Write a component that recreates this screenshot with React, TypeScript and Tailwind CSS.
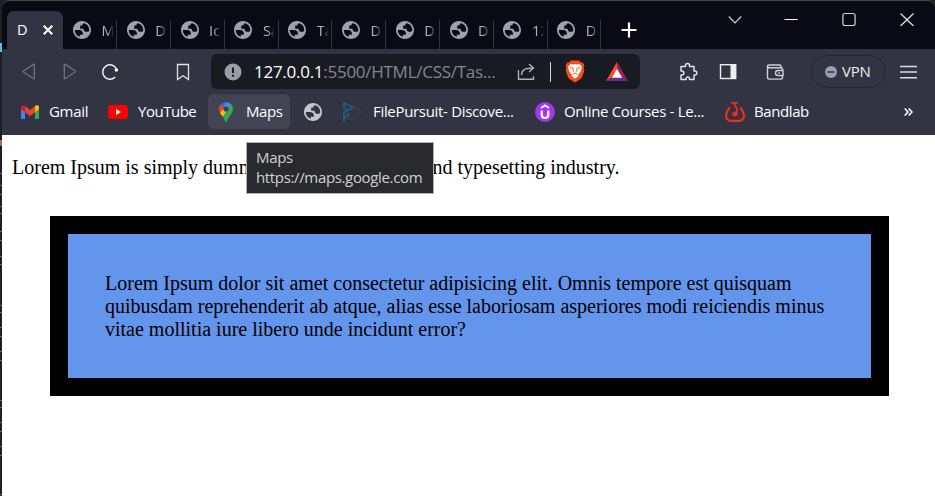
import type { ReactNode } from "react";

function Globe({ color }: { color: string }) {
  return (
    <svg viewBox="2 2 20 20" className="size-[18px] shrink-0" fill={color}>
      <path d="M12 2C6.48 2 2 6.48 2 12s4.48 10 10 10 10-4.48 10-10S17.52 2 12 2zM4 12h4.4c3.4.02 4.93 1.73 4.6 5.15H9.5v2.46A8 8 0 0 1 4 12zm16 0c0 .36-.03.72-.08 1.07-.68.62-1.56.93-2.62.93-2.4 0-3.6-1.15-3.6-3.45H10V7.1h2.4c0-1.68.95-2.6 2.7-2.45A8 8 0 0 1 20 12z" />
    </svg>
  );
}

function Tab({ title }: { title: string }) {
  return (
    <div className="mt-5 flex h-[29px] w-[53.8px] shrink-0 border-r border-[#35363b] pt-px pl-[9.5px]">
      <Globe color="#9da2ad" />
      <span className="ml-[10.5px] h-[20px] w-[12px] overflow-hidden text-[14.5px] leading-[20px] whitespace-nowrap text-[#b4b5ba] [mask-image:linear-gradient(to_right,black_40%,transparent)]">
        {title}
      </span>
    </div>
  );
}

function TabStrip() {
  const titles = ["My", "Do", "Ico", "Sa", "Tas", "Do", "Do", "Do", "12", "Do"];
  return (
    <div className="flex h-[48px] bg-[#0a0a14]">
      <div className="ml-[5px] mt-[10px] flex h-[38px] w-[56px] rounded-t-[7px] bg-[#323443] pt-[9px] pl-[10px] text-[14.5px] leading-[20px] text-white">
        <span className="w-[10px]">D</span>
        <svg viewBox="0 0 10 10" className="mt-[5px] ml-[16px] size-[10px]" stroke="white" strokeWidth="2">
          <path d="M.7.7l8.6 8.600M9.300.7L.7 9.300" />
        </svg>
      </div>
      <div className="-mt-px ml-[0.5px] flex">
        {titles.map((t, i) => (
          <Tab key={i} title={t} />
        ))}
      </div>
      <svg viewBox="0 0 16 16" className="mt-[21px] ml-[20px] size-[16px]" stroke="white" strokeWidth="2.2">
        <path d="M8 .5v15M.5 8h15" />
      </svg>
      <div className="mr-[21px] ml-auto flex pt-[11px]">
        <svg viewBox="0 0 14 14" className="mr-[42px] size-[14px]" fill="none" stroke="#d4d4d8" strokeWidth="1.1">
          <path d="M.8 4.5L7 11l6.2-6.5" />
        </svg>
        <svg viewBox="0 0 14 14" className="mr-[44px] size-[14px]" stroke="white">
          <path d="M.5 7.500h13" />
        </svg>
        <svg viewBox="0 0 14 14" className="mr-[44px] size-[14px]" fill="none" stroke="#d4d4d8" strokeWidth="1.2">
          <rect x=".9" y="1.500" width="12.200" height="12" rx="2" />
        </svg>
        <svg viewBox="0 0 14 14" className="size-[14px]" stroke="#e4e4e8" strokeWidth="1.2">
          <path d="M.5 1.500l13 12.500M13.500 1.500L.5 14" />
        </svg>
      </div>
    </div>
  );
}

function Toolbar() {
  return (
    <div className="flex h-[45px] items-center">
      <svg viewBox="0 0 14 17" className="ml-[20px] h-[17px] w-[14px]" fill="none" stroke="#6d6f7b" strokeWidth="1.4" strokeLinejoin="round">
        <path d="M12.300 1.800v13.400q0 1-1 .3L1.400 9q-.7-.5 0-1l9.900-6.600q1-.6 1 .4z" />
      </svg>
      <svg viewBox="0 0 14 17" className="ml-[27px] h-[17px] w-[14px]" fill="none" stroke="#6d6f7b" strokeWidth="1.4" strokeLinejoin="round">
        <path d="M1.300 1.800v13.400q0 1 1 .3L12.200 9q.7-.5 0-1L2.300 1.400q-1-.6-1 .4z" />
      </svg>
      <svg viewBox="0 0 18 18" className="ml-[24px] size-[18px]" fill="none" stroke="#f0f0f3" strokeWidth="1.5" strokeLinecap="round">
        <path d="M13.800 14.400A7.200 7.200 0 1 1 15.200 5.500" />
        <circle cx="15.400" cy="7" r="1.800" fill="#fff" stroke="none" />
      </svg>
      <svg viewBox="0 0 14 18" className="ml-[57px] h-[18px] w-[14px]" fill="none" stroke="#e3e3e7" strokeWidth="1.3">
        <path d="M1.500 1.500h11v15L7 12.800l-5.500 3.700z" />
      </svg>
      <div className="ml-[21px] flex h-[35px] w-[429px] items-center rounded-[6px] bg-[#191b22]">
        <svg viewBox="0 0 18 18" className="ml-[13px] size-[18px]">
          <circle cx="9" cy="9" r="8.500" fill="#9a9ca5" />
          <path d="M9 4.500v5.500M9 11.700v2" stroke="#191b22" strokeWidth="2" />
        </svg>
        <div className="ml-[12px] w-[245px] text-[17px] tracking-[-0.27px] whitespace-nowrap text-[#85868d]">
          <span className="text-white">127.0.0.1</span>:5500/HTML/CSS/Tas...
        </div>
        <svg viewBox="0 0 18 18" className="ml-[18px] size-[18px]" fill="none" stroke="#aeb0b5" strokeWidth="1.4">
          <path d="M1.500 7v9.300h15v-3M4.500 12c.2-5 3-7 12-7M12 1l4.500 4-4.500 4" />
        </svg>
        <div className="ml-[15px] h-[20px] w-px bg-[#d8d8dc]" />
        <svg viewBox="0 0 20 23" className="ml-[14px] h-[23px] w-[20px]">
          <path d="M6 .5h8l1.800 2h2l1.500 3-.6 2 .6 3-2 6q-.5 1.500-1.800 2.400L10 22.600l-5.500-3.700Q3.200 18 2.700 16.500l-2-6 .6-3-.6-2 1.500-3h2z" fill="#fb4d12" />
          <path d="M5.500 4l2.300.5L10 4l2.200.5 2.300-.5 2.500 3-.7 2-.3 2-2.500 3.500L13 16.500l-3 2.300-3-2.300-.5-2L4 11l-.3-2L3 7z" fill="#fff" />
          <path d="M5 7.500l3.300.8L8 9.600l.7 2.200M15 7.500l-3.300.8.3 1.300-.7 2.200M7.500 14.500L10 13l2.500 1.500" fill="none" stroke="#fb4d12" strokeWidth=".9" />
        </svg>
        <svg viewBox="0 0 24 20" className="ml-[20px] h-[20px] w-[24px]">
          <path d="M12 0L1 19l6-3.500L12 7z" fill="#ff4a22" />
          <path d="M12 0l11 19-6-3.500L12 7z" fill="#9e1f63" />
          <path d="M1 19h22l-6-3.500H7z" fill="#662d91" />
          <path d="M12 6.800l5.200 8.900H6.800z" fill="#fff" />
        </svg>
      </div>
      <svg viewBox="0 0 20 20" className="ml-[38px] size-[20px]" fill="none" stroke="#e1e1e5" strokeWidth="1.5" strokeLinejoin="round">
        <path d="M3 4.500h4.500v-1a2 2 0 0 1 4 0v1H16V9h.8a2 2 0 0 1 0 4H16v4.500h-4.500v-.8a1.700 1.700 0 0 0-3.400 0v.8H3V13h.8a2 2 0 0 0 0-4H3z" />
      </svg>
      <svg viewBox="0 0 18 17" className="ml-[21px] h-[17px] w-[18px]">
        <rect x="1.500" y="1.700" width="15" height="13.800" fill="none" stroke="#eeeeef" strokeWidth="1.4" />
        <path d="M11.500 1h5.800v15h-5.800z" fill="#eeeeef" />
      </svg>
      <svg viewBox="0 0 18 18" className="ml-[29px] size-[18px]" fill="none" stroke="#d0d0d5" strokeWidth="1.4">
        <path d="M16.500 7.500V6.200q0-1.500-1.500-1.500H3.200M15 4.700V3.200q0-1.200-1.200-1.200H3Q1.500 2 1.500 3.300t1.700 1.400M1.500 3.300v11q0 1.800 1.800 1.800H15q1.500 0 1.500-1.500v-2" />
        <path d="M17 7.500h-5a2.500 2.500 0 0 0 0 5h5zM12.200 10h1.600" />
      </svg>
      <div className="ml-[27px] flex h-[33px] w-[75px] items-center rounded-full border-[1.5px] border-[#242633] pl-[13px]">
        <svg viewBox="0 0 12 12" className="size-[12px]">
          <circle cx="6" cy="6" r="6" fill="#9b9db1" />
          <path d="M2.500 6h7" stroke="#323443" strokeWidth="1.5" />
        </svg>
        <span className="-mt-px ml-[5px] text-[15px] tracking-[-0.2px] text-[#ececf0]">VPN</span>
      </div>
      <svg viewBox="0 0 17 14" className="ml-[14px] h-[14px] w-[17px]" stroke="#dcdce0" strokeWidth="1.5">
        <path d="M0 1.500h17M0 7h17M0 12.700h17" />
      </svg>
    </div>
  );
}

function Bookmark({ icon, label, className }: { icon: ReactNode; label: string; className: string }) {
  return (
    <div className={`flex h-[35px] shrink-0 items-center rounded-[6px] whitespace-nowrap ${className}`}>
      {icon}
      {label && <span className="text-[15px] text-white">{label}</span>}
    </div>
  );
}

function BookmarksBar() {
  return (
    <div className="flex h-[41px]">
      <Bookmark
        className="w-[98px] pl-[19px] tracking-[-0.3px]"
        label="Gmail"
        icon={
          <svg viewBox="0 0 18 14" className="mr-[10px] h-[14px] w-[18px]">
            <path d="M0 2v10.700Q0 14 1.300 14H4V4z" fill="#4285f4" />
            <path d="M18 2v10.700q0 1.300-1.300 1.300H14V4z" fill="#34a853" />
            <path d="M0 2Q0 0 2 0q.7 0 1.500.7L4 1v6.300L0 4.200z" fill="#c5221f" />
            <path d="M18 2q0-2-2-2-.7 0-1.500.7L14 1v6.300l4-3.100z" fill="#fbbc04" />
            <path d="M4 1l5 4 5-4v6.300l-5 4-5-4z" fill="#ea4335" />
          </svg>
        }
      />
      <Bookmark
        className="w-[106px] pl-[8px] tracking-[-0.48px]"
        label="YouTube"
        icon={
          <svg viewBox="0 0 20 14" className="mr-[10px] h-[14px] w-[20px]">
            <rect width="20" height="14" rx="3.5" fill="#f00" />
            <path d="M8 4l5 3-5 3z" fill="#fff" />
          </svg>
        }
      />
      <Bookmark
        className="ml-[2px] w-[82px] bg-[#424453] pl-[11px] tracking-[-0.45px]"
        label="Maps"
        icon={
          <svg viewBox="0 0 14 20" className="mr-[13px] h-[20px] w-[14px]">
            <path d="M7 0a7 7 0 0 0-5.400 2.500L5 6z" fill="#1a73e8" />
            <path d="M1.600 2.500Q0 4.500 0 7q0 2 1 4l6-5z" fill="#ea4335" />
            <path d="M7 0l5.300 2.500L7 9z" fill="#4285f4" />
            <path d="M1 11l7.800-9.500 3.500 1L4 15z" fill="#fbbc04" />
            <path d="M12.300 2.500Q14 4.500 14 7q0 3-2.500 6.200Q8.500 17 8 19.300q-1 1.400-2 0Q5.500 17 4 15z" fill="#34a853" />
            <path d="M7 0q3.300 0 5.300 2.500L9.500 6H6L4.500 4z" fill="#4285f4" />
            <circle cx="7" cy="7" r="2.6" fill="#31425f" />
          </svg>
        }
      />
      <Bookmark className="w-[44px] pl-[14px]" label="" icon={<Globe color="#c5c6ca" />} />
      <Bookmark
        className="w-[191px] pl-[9px] tracking-[-0.32px]"
        label="FilePursuit- Discove..."
        icon={
          <svg viewBox="0 0 20 20" className="mr-[10px] size-[20px]" fill="none" strokeWidth="1.9">
            <path d="M1 20V10.500l9-5L1 1v5.500l4 2M1 16l4-2v-3" stroke="#1b5d85" />
            <path d="M12 5.500l7 4.500L6 17" stroke="#414247" strokeWidth="1" />
          </svg>
        }
      />
      <Bookmark
        className="w-[190px] pl-[10px] tracking-[-0.32px]"
        label="Online Courses - Le..."
        icon={
          <svg viewBox="0 0 20 20" className="mr-[9px] size-[20px]" fill="none" stroke="#fff">
            <circle cx="10" cy="10" r="10" fill="#a435f0" stroke="none" />
            <path d="M6.700 8.500v4q0 3.500 3.300 3.500t3.300-3.500v-4" strokeWidth="2.2" />
            <path d="M6 6l4-2.600L14 6" strokeWidth="1.8" />
          </svg>
        }
      />
      <Bookmark
        className="w-[110px] pl-[10px] tracking-[-0.4px]"
        label="Bandlab"
        icon={
          <svg viewBox="0 0 20 20" className="mr-[9px] size-[20px]" fill="none" stroke="#f12c18" strokeWidth="2.2">
            <path d="M4.600 5.500Q1.100 10.500 1.100 13.800 1.200 18.800 6.500 18.800h7q5.300 0 5.400-5Q18.900 10.500 15.400 5.500" />
            <path d="M6.200.9h6.600M8.700 1l3.300 6v5" strokeWidth="1.7" />
            <circle cx="9.900" cy="12" r="2.500" fill="#f12c18" stroke="none" />
          </svg>
        }
      />
      <svg viewBox="0 0 9 8" className="mt-[14px] mr-[22px] ml-auto h-[8px] w-[9px]" fill="none" stroke="#fff" strokeWidth="1.6">
        <path d="M.7.5L4 4 .7 7.500M4.700.5L8 4 4.700 7.500" />
      </svg>
    </div>
  );
}

function BackdropEdge() {
  const marks = [173, 185, 194, 206, 213, 231, 240, 256, 264, 305, 312, 327, 336, 351, 360, 400, 407, 422, 431, 446, 455, 494];
  return (
    <svg viewBox="0 0 2 496" className="h-[496px] w-[2px] shrink-0 bg-[#1f1f23]">
      <rect y="43" width="2" height="9" fill="#55bfe8" />
      <rect y="140" width="2" height="6" fill="#b56d43" />
      {marks.map((y) => (
        <rect key={y} y={y} width="2" height="1" fill="#846458" />
      ))}
    </svg>
  );
}

export default function App() {
  return (
    <div className="flex h-[496px] w-[935px] overflow-hidden bg-[#202024] font-['Open_Sans','Noto_Sans',sans-serif]">
      <BackdropEdge />
      <div className="w-[933px] shrink-0 overflow-hidden rounded-t-[8px] border-t border-[#454545] bg-[#323443]">
        <TabStrip />
        <Toolbar />
        <BookmarksBar />
        <main className="relative h-[361px] bg-white px-[10px] pt-[21px] font-['Liberation_Serif',serif] text-[20px] leading-[23px] text-black">
          <p>Lorem Ipsum is simply dummy text of the printing and typesetting industry.</p>
          <div className="mt-[37px] ml-[38px] h-[180px] w-[839px] border-[18px] border-black bg-[#6495ed] pt-[38px] pr-[30px] pl-[37px]">
            Lorem Ipsum dolor sit amet consectetur adipisicing elit. Omnis tempore est quisquam
            <br />
            quibusdam reprehenderit ab atque, alias esse laboriosam asperiores modi reiciendis minus
            <br />
            vitae mollitia iure libero unde incidunt error?
          </div>
          <div className="absolute top-[7px] left-[244px] h-[52px] w-[188px] border border-[#b0b1b5] bg-[#292a2e] pt-[4px] pl-[9px] font-['Open_Sans',sans-serif] text-[15px] leading-[20px] tracking-[-0.35px] whitespace-nowrap text-[#d0d0d3]">
            Maps
            <br />
            https://maps.google.com
          </div>
        </main>
      </div>
    </div>
  );
}
